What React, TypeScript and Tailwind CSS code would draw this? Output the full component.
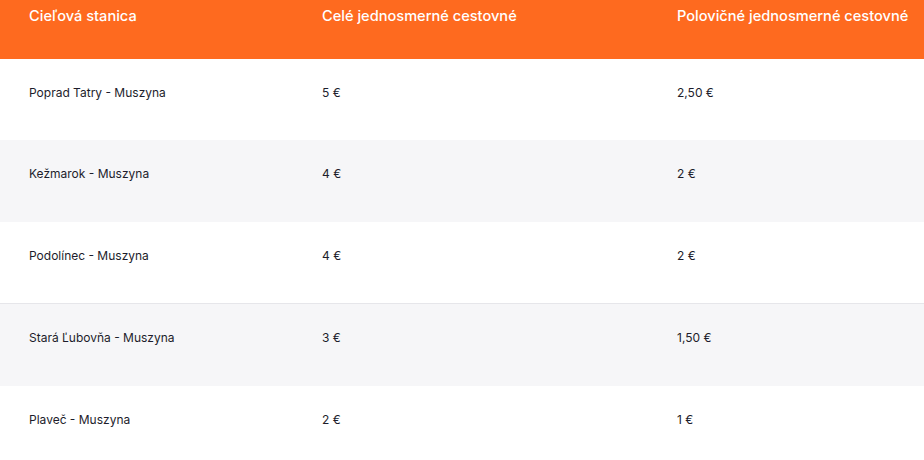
const rows = [
  { station: "Poprad Tatry - Muszyna", full: "5 €", half: "2,50 €" },
  { station: "Kežmarok - Muszyna", full: "4 €", half: "2 €" },
  { station: "Podolínec - Muszyna", full: "4 €", half: "2 €" },
  { station: "Stará Ľubovňa - Muszyna", full: "3 €", half: "1,50 €" },
  { station: "Plaveč - Muszyna", full: "2 €", half: "1 €" },
];

export default function App() {
  return (
    <div className="w-[924px] h-[460px] overflow-hidden bg-white font-['Inter',sans-serif]">
      <div className="grid grid-cols-[293px_355px_1fr] h-[59px] bg-[#fe6a1f] text-white text-[14.6px] font-medium">
        <div className="pl-[29px] pt-[6px]">Cieľová stanica</div>
        <div className="pl-[29px] pt-[6px]">Celé jednosmerné cestovné</div>
        <div className="pl-[29px] pt-[6px] whitespace-nowrap">Polovičné jednosmerné cestovné</div>
      </div>
      {rows.map((r, i) => (
        <div
          key={r.station}
          className={
            "grid grid-cols-[293px_355px_1fr] text-[12px] text-[#1d1d2b] " +
            (i === 0 ? "h-[81px] " : "h-[82px] ") +
            (i % 2 === 1 ? "bg-[#f6f6f8]" : "bg-white") +
            (i === 2 ? " border-b border-[#e6e6ea]" : "")
          }
        >
          <div className="pl-[29px] pt-[25px]">{r.station}</div>
          <div className="pl-[29px] pt-[25px]">{r.full}</div>
          <div className="pl-[29px] pt-[25px]">{r.half}</div>
        </div>
      ))}
    </div>
  );
}
